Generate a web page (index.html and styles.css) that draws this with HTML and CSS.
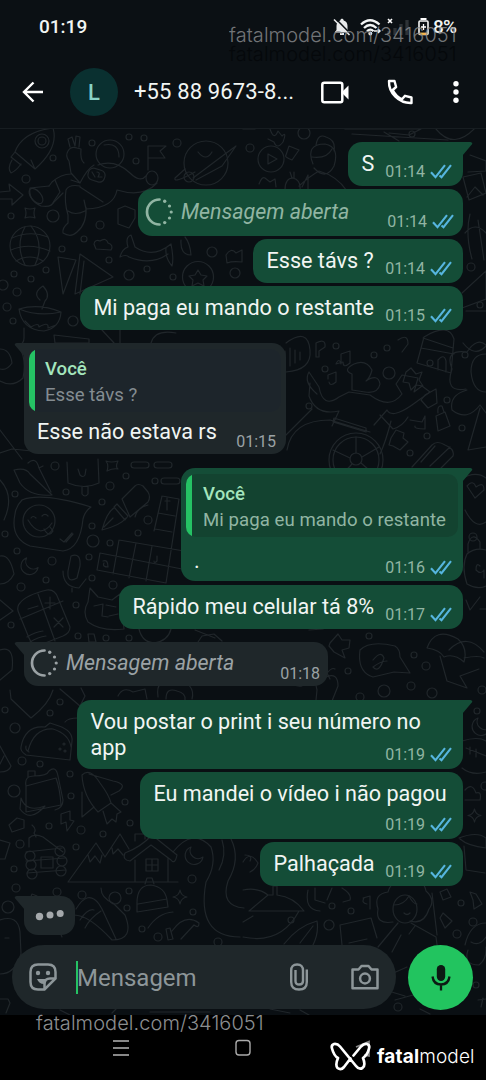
FILE: index.html
```html
<!DOCTYPE html>
<html lang="pt-BR">
<head>
<meta charset="utf-8">
<title>Conversa</title>
<link rel="stylesheet" href="styles.css">
</head>
<body>
<svg width="0" height="0" class="defs">
  <symbol id="ticks" viewBox="0 0 22 15"><path d="M1 8.200l4.500 5L15 1.200M9.500 11.500l2 1.700L21 1.200" /></symbol>
  <symbol id="once" viewBox="0 0 28 28"><path d="M14.500 1.500a12.500 12.500 0 0 0 0 25" fill="none" stroke="currentColor" stroke-width="2.700" stroke-linecap="round"/><g fill="currentColor"><circle cx="19.700" cy="3.200" r="1.700"/><circle cx="24.500" cy="8" r="1.600"/><circle cx="26.200" cy="14" r="1.600"/><circle cx="24.500" cy="20" r="1.600"/><circle cx="19.700" cy="24.600" r="1.700"/></g></symbol>
  <symbol id="moon" viewBox="0 0 22 22"><path d="M8 2a9 9 0 1 0 12 10A8 8 0 0 1 8 2z"/></symbol>
  <symbol id="spark" viewBox="0 0 16 16"><path d="M8 1q1 6 7 7q-6 1-7 7q-1-6-7-7q6-1 7-7z"/></symbol>
</svg>
<div class="phone">
  <div class="status">
    <span class="clock">01:19</span>
    <div class="status-icons">
      <svg class="bell" width="18" height="18" viewBox="0 0 18 18"><path d="M3.500 12V8c0-3 1.700-5 3.800-5.500C7.500.3 10.500.3 10.700 2.500 13 3 14.500 5 14.500 8v4l2 2.500H1.500z" fill="#e8eaeb"/><path d="M7 16h4" stroke="#e8eaeb" stroke-width="2"/><path d="M2.500.5l15 15.500" stroke="#0b1014" stroke-width="1.600"/><path d="M1 1.500l15.500 15.500" stroke="#e8eaeb" stroke-width="1.600"/></svg>
      <svg class="wifi" width="21" height="18" viewBox="0 0 21 18"><g fill="none" stroke="#f2f4f4" stroke-width="2.300"><path d="M1 6.500q9-8.500 18.500 0M4 10q6-6 12.500 0M7 13.200q3.500-3.300 6.500 0"/></g><circle cx="10.300" cy="15.500" r="1.900" fill="#f2f4f4"/><path d="M14 13h6m-2-2l2 2-2 2" stroke="#f2f4f4" stroke-width="1.500" fill="none"/></svg>
      <svg class="signal" width="22" height="18" viewBox="0 0 22 18"><path d="M1 1l4 4m0-4L1 5" stroke="#fff" stroke-width="1.600"/><path d="M2 13v4M8 10v7M14 6v11M20 2v15" stroke="#2d3236" stroke-width="3.300"/></svg>
      <svg class="battery" width="11" height="18" viewBox="0 0 11 18"><path d="M3.500 2V1h4v1" stroke="#fff" stroke-width="2" fill="none"/><rect x="1" y="3" width="9" height="13.500" rx="1" fill="none" stroke="#f4f4f4" stroke-width="1.600"/><path d="M1.500 15.800h8" stroke="#f3b44d" stroke-width="2.400"/><path d="M5.500 6v6M3 9h5" stroke="#fff" stroke-width="1.300"/></svg>
      <span class="percent">8%</span>
    </div>
  </div>
  <header class="bar">
    <svg class="back" width="22" height="22" viewBox="0 0 22 22"><path d="M21 11H2M11.500 1.500L2 11l9.500 9.500" fill="none" stroke="#fff" stroke-width="2.400"/></svg>
    <div class="avatar">L</div>
    <div class="name">+55 88 9673-8...</div>
    <svg class="video" width="28" height="23" viewBox="0 0 28 23"><rect x="1.300" y="1.800" width="20" height="19.500" rx="2" fill="none" stroke="#fff" stroke-width="2.500"/><path d="M20.500 11.500L27.500 4.500v14z" fill="#fff"/></svg>
    <svg class="call" width="26" height="26" viewBox="0 0 26 26"><path d="M2 2h5.500l1.600 6L5.700 11c2 4.200 5 7.200 9.300 9.300l3-3.500 6.500 1.700V24C12 24.500 1.500 14 2 2z" fill="none" stroke="#fff" stroke-width="2.400" stroke-linejoin="round"/></svg>
    <svg class="more" width="6" height="22" viewBox="0 0 6 22"><g fill="#fff"><circle cx="3" cy="2.800" r="2.700"/><circle cx="3" cy="11" r="2.700"/><circle cx="3" cy="19.200" r="2.700"/></g></svg>
  </header>

  <main class="chat">
    <svg class="doodles" viewBox="0 129 486 886">
      <!-- rocket, astronaut, planet -->
      <path d="M15 152q7-20 38-24q6 20-18 41zM15 152l-4 5 10 8M35 169l-4-9M12 160q-5 8-1 13q5-2 10-9"/><circle cx="42" cy="141" r="7"/><circle cx="42" cy="141" r="4"/>
      <circle cx="110" cy="154" r="14"/><path d="M104 145q15-3 15 12M84 163q-4-3-3-14l-4-1q-6-2-9 3q-3 5 1 10l2 12 9 10q7-14 14-18M70 147l-2-8 4-2 3 9 1-10 4 1-1 10M98 165q17-6 32 8q10 10 16 3M157 183q-14 15-40 7M71 180l9 3M71 174q-10 0-19 8l-3 4M63 193l-10 10M117 190q-3 18-31 19l-2-9M66 190q-2 12 2 25v8q-6 5-5 10q8 5 14-1q10-8 9-25M68 211q7 5 17 0M80 187l23 15M66 190q3-6 14-4"/><path d="M49 186l-19 2q-2 12 11 18q11 2 13-5l6-9-5-12"/><ellipse cx="36" cy="196" rx="9" ry="5" transform="rotate(50 36 196)"/><rect x="88" y="169" width="17" height="12" rx="5" transform="rotate(18 96 175)"/><path d="M92 172l3 5m2-5q4 0 1 5h4M148 170v-24h18l-6 5 5 7h-17"/><ellipse cx="152" cy="178" rx="6" ry="7"/>
      <circle cx="206" cy="163" r="22"/><path d="M195 172q-22 12-20 6l10-9M193 178l32-24 11-8-14 20-26 14M198 152q8 10 14 0"/><circle cx="189" cy="177" r="5"/>
      <path d="M0 192l10-1-1-7 14 11-11 10v-6H0M25 208q5 2 10 0q-2 5 0 10q-5-2-10 0q2-5 0-10z"/>
      <!-- globe -->
      <circle cx="30" cy="246" r="20"/><path d="M12 238q18-8 36-1M11 250q18-8 39 1M16 261q14-8 27 0M25 227q-10 18 0 38M31 226q14 18 4 39"/>
      <path d="M118 217v-8l7-3 10 4v8l-6 10-11-4zM94 244q1-5 6-3q6-4 8 2q6 2 3 7l-15-1z"/>
      <path d="M120 257q2-8 8-10q-3-10 3-12l4 12q18 12 36-3q3 15 1 22q-7-8-6-18M120 257q6-3 9 0q22 9 39-3M181 240q-1 15 10 15q-1-12-6-18"/>
      <path d="M58 257l18 3-13 34zM80 254l33 23-38 17zM84 261l-4 33"/>
      <circle cx="198" cy="277" r="15.500"/><path d="M198 270l3 5 6 1-4 4 1 6-6-3-6 3 1-6-4-4 6-1zM226 255q5-8 10-2l6-3v12q-10-1-15 1z"/>
      <path d="M19 309q20 8 42 3q-1 16-17 19q-22-1-25-22zM19 309q20-6 42 3M40 300q-8-7 3-14q8 9 2 15l-3 8M25 321l6 6q8-5 8 0q10-6 9 1l8-3"/>
      <path d="M54 335l35 4v4H55zM102 330l12 13M120 330v14M151 343q4-14 25-10M24 328v10q0 5-5 8q8 14 4 32q-10 10-23 3M0 349q10 0 12 14q-5 8-12 6"/>
      <!-- upper right -->
      <circle cx="271" cy="159" r="13"/><path d="M268 154v10l9-5zM270 129q4 12 8 2l4 5q5-5 1 6q-6 8-9 0l-6-3M243 129l12 0M289 146l10 4-7 10q-8-3-6-5zM259 184q3-8 6-6l5 4 5-3 1 8M285 190q0-12 8-12q8 2 7 12M292 178l-2-6m4 0v6M299 186q11-10 20-15q18 5 28 20M313 164q-8-20 12-20q15 3 9 22q-8 15-20 2M316 145q2-12 10-8q10 3 8 14M312 157q15 2 20-8M302 187l6-12v14M345 129l76 0-12 6-20-2M352 134l96 6M384 132l15 9M436 129q18 22 40-2M470 155l16 6v10l-18 1M463 177l18-4 5 20-17 7zM467 197l8-10 8 8M470 214q-5 20 2 45M478 220l6 40M465 233q10-12 21 0M462 293l24-22v28l-24 9M466 311h20"/>
      <!-- centre right -->
      <path d="M286 343q22-16 24 7q2 20-24 22M285 351v12M290 348v18M295 350v13M300 352v8M316 343q10-5 9 4l-6 4v6h-3zM336 364q3-7 5 0v-10l9-3v12q-7 6-7-1zM328 379v-4l8-3v10q-6 5-7 0"/>
      <path d="M352 383v-9q-10-4 2-10q12-5 18 6q-2 8-6 11q12-8 14 3q-2 10-15 8l-13-2zM317 394q-14-12-8-22l10 15q4 22 20 10l10-5 21 3q20 15 32-1l-6-10 6-9 16 3-4 14 8-6 8 6-18 13q-20 14-25 5l-13 15M310 383l-1 13q7 20 30 15l-7 15M280 441l32-32M287 450q5-30 43-30l40 12M333 422l33 10v-4l-32-10z"/>
      <circle cx="356" cy="460" r="27"/><circle cx="356" cy="460" r="23"/><circle cx="356" cy="459" r="6"/><path d="M356 453v-16M362 457l17-10M361 463l15 13M352 464l-12 13M350 458l-17-8M391 421q-5 20-11 33M380 415l13 14q10-3 15-12"/>
      <path d="M417 363l7-26q25-15 30 2l-3 34zM421 348l33 6M438 370v-10q6-7 8 1v11M423 338l30 10M466 389q-22 4-14-20q-8-20 15-17q10-15 19-7M486 354q-15 0-15 18q2 20 15 20M467 390q-18 5-15 20q15 12 28-5l6 8M480 408l-12 42 18-3M398 340q10-7 10 4l-6 8M406 372l5-4 5 6 6-2-3 8 4 6-7-1-5 5-2-7-6-1zM425 395l11-6 1 14-9 5-7-8zM436 416l9-4 5 14-12 5zM438 413q-1-8 4-7l2 6M410 420l12 2 3-6v13q-11 0-10-3M391 438l5-8 8 3-1 5 5 4-8 8-7-4-4-1zM412 467l20-22q5-5 13 0q10 4 8 11l-12 12M421 462l14-16M430 466l20-19M463 343q12 15 23 3M460 480q15-10 26-2M465 510q10 20 21 12M467 486q6-7 9 1q8-6 8 3l-9 8z"/>
      <!-- left middle -->
      <path d="M0 453l12-4 20 2M0 430l22 29M0 480q15 16 4 40M14 470q12-3 16 4l22 21q-22 2-32-12zM28 463q8-7 11 5l12 24M39 468l4-2M67 462l1 21q16 7 31 0l-1-24M82 486v8q3 4 6 0v-8M78 469l2 6q3 3 5 0l1-6M106 461q5 2 12 0q-3 6 0 8q-5-1-11 2q2-6-1-10z"/><rect x="131" y="462" width="18" height="6" rx="3"/><rect x="154" y="462" width="18" height="6" rx="3"/><rect x="161" y="478" width="19" height="6" rx="3"/>
      <path d="M22 500q20-8 69 7q-6 4-8 12q-3 30-20 32l-33-5q-20-8-15-32q1-8 7-14M60 539l4 3 8-9M66 542l7-8"/><circle cx="39" cy="521" r="16"/><path d="M28 520q12 20 24 3M31 518q2-3 5 0M42 516q3-3 6 0M44 529q5 9 9 2l-3-4"/>
      <path d="M122 499l13-13q3-3 8 0l5 6q3 5 0 10l-18 15zM117 504l11 12-3 4-11-13zM114 508q-7 4-12 22q19-5 24-12M104 527l9-9M135 517q2-9 13-12"/>
      <path d="M162 496l17 3-13 84-69-13 3-17 82 16M158 513l17 3M155 529l17 3M119 540l65 11M119 540l-6 34M136 543l-7 35M152 546l-6 35M162 496l-8 35M165 501h5m-3-3v12M157 556v5q-3 3-3 0M103 561q5-2 5 6q-6 0-4-4"/>
      <path d="M0 556q10-2 14 18q-5 10-14 10M0 600l13 11-13 9M71 556q10-4 9 10l-3 12q-10 6-9-7zM63 571q0 16 16 17l7-9M72 588v4M0 650q15-5 12 20L0 680"/>
      <path d="M20 603q6-8 27-13q8-1 11 8l12 29q0 6-7 9l-23 9q-8 1-11-7l-11-27q-1-5 2-8M38 594l17 47M20 619l43-18M45 603h10m-5-6v12M54 618l9 9m0-9l-9 9M28 609l10-3M27 637q8-5 16-6M30 642q8-5 16-6"/>
      <path d="M90 588l8 9 14 3 8-6 4 35q-22 3-36-7q-6-10 0-20zM94 606l9-2-1 12 6 1M109 616l9-2M106 605l10 2M139 629q3 13 15 14q14-2 17-14M198 642l4-6 12-2 8 7M88 634l6 0 2 8h-7zM195 630l20 8"/>
      <!-- middle right -->
      <path d="M480 548v-6q-8-11-12 2v8M467 554q8-7 19-4M467 554q-6 12 0 30q10 6 19 2M480 566q-4-4-4 4q5 5 8 0v8M466 600l4 10 10-13M480 609h6M330 643l8-9 4 6h8l-1 8-7 2 3 8-11-6-5-6zM360 650q10-10 35-4q5 3 5 11l10 16-16-1-21 5q-16-5-13-27M373 660q8-10 11-2q-5 16-11 9q8-6 14-6M427 648q8-22 31-9q10 9 6 23q-10-9-20-5q-4-7-17-9zM440 656l7 25 20 7-7-12 19-7M464 658q15-3 20 0M449 650q18-18 35 2M302 686q-10 2-13-12M309 630l14-1M316 700l1-10q-6-24 9-13q12-5 12 9l-6 15M330 679l-3-6q5-6 8-4"/>
      <!-- lower left -->
      <path d="M10 690l1 9 20 19q18-14 22-28M60 689l20 17 5-10-4-8M118 696q5-10 15-4l12-3 2 10M158 697q-3-20 18-18q20 5 16 20M166 699q0-12 11-8q9 2 8 9M65 722q3-4 13-4"/>
      <path d="M21 747q4-22 24-20l5-4 9 3q14 5 13 15l-2 19-44-5q-6-4-5-8M28 751q6-23 25-22q16 5 18 18M29 752q-4-2-3-6"/><circle cx="60" cy="749" r="1"/><circle cx="64" cy="744" r="1"/><circle cx="65" cy="751" r="1"/>
      <path d="M0 746l11 20q-2 6-11 6M4 756l-4 8M26 786l30-8q4 11 5 27l-35 7zM26 786q-2-10 8-10q13 0 15-5q7-6 9 5l5 24q0 8-8 10M28 777v-6h7v5M21 798q5 15 24 8q-15 17-25 3zM9 825l8-7 7 2v8l-12 4zM61 814l9-3v9l4 1-7 10-1-9-5 2z"/>
      <path d="M82 775q8-8 18 8q9 12 11 20l-13 9q-15-16-16-37zM89 774l24 7q15 3 6 10l-8 4M82 792v25l12-10M103 811l4 13 5-5 4 3 1-8 4-2-10-9M0 840l10 3-5 16H0M29 847v-9q5-5 14-1l20 15M32 825q5 4 2 8l2 4M26 852l36-4M26 861l39-3M27 873l39-3"/><circle cx="30" cy="856" r="5"/><circle cx="31" cy="865" r="5"/><circle cx="32" cy="874" r="5"/><circle cx="60" cy="851" r="5"/><circle cx="62" cy="861" r="5"/><circle cx="61" cy="871" r="5"/><path d="M41 857h12v11H41z"/>
      <path d="M68 882h110M68 882l28-39 9 14 15-23 9 15M88 855l2 7 5-6 5 7 2-8M112 848l1 6 5-5 5 6M125 853q16-6 27-18l25 20q-2 10-6 5l-20-15-21 16q-8-1-5-8zM135 860v22M168 858v24M146 859h12v12h-12zM152 859v12M146 865h12M135 841v-7h10v5M173 852q20-25 38-5q6 17-5 35q-10 55 34 55M231 839q10 20-3 42q-8 25 16 27M222 840q5 15-3 30"/>
      <use href="#moon" x="183" y="845" width="22" height="22"/><use href="#spark" x="172" y="889" width="16" height="16"/><use href="#spark" x="467" y="808" width="15" height="15"/><use href="#moon" x="470" y="716" width="22" height="22"/>
      <path d="M137 903q0-18 14-18q14 2 16 15l1 7-31 5zM138 904l29-5M145 884l2-6h5l2 6M101 888q0 10 12 15l12 12q10 25-13 25q-23-25-38-25M76 909q12-20 23-5l3 5 14 30M80 920q8-12 14-10M85 928q5-10 16-17M57 925l5 12M148 928q10-15 25-16M166 929l4-1 3 11-5 1zM172 931q13-18 27-8q0 6-5 2l-13 14M30 899l2-5 5 2-3 7M0 920q18-6 20 12l1 22q-6 20-21 20M5 938h4M0 999l8 0 2 4-4 10"/>
      <!-- lower right -->
      <path d="M462 741q16-5 24 0M462 768q10 8 24 4M466 748l20 8M470 747v7M476 749v8M465 790q7-8 11 3q6-2 4 7h-15M459 838q18-7 27 0v10q-18-2-26-9M464 846l2 24 19 3M243 862q7-12 15 1q-2 6-8 9M245 855q8 0 5 6M249 911l19-16h5v-9h4v9q17 2 27 16zM243 890q15-3 25 5M243 937q38 8 56-26M243 922l10-6M308 890q-4 20 12 21M315 888v12l10 3M332 888l-5 12M342 888q10 6 8 12l-7 2M363 898l7-2v13M364 898q-3 5 3 6M284 944q14-18 33-23q2 12-4 24M300 943l13-17M370 945M342 945l-2-20 31-7 6 20M349 943l18-4"/>
      <path d="M393 922q-18 3-15-13q-5-15 10-17q4-15 22-10q14-3 16 9q10 9 3 18q-5 16-19 12"/><ellipse cx="405" cy="909" rx="12" ry="14"/><path d="M394 905q10 0 15-9q4 8 8 8M404 913q3 3 6 0M398 923l-20 24M411 923l25 14 2 15M432 893l5 42M401 935l-9 17M415 926l-6 8M440 892l7-3 4 8-8 3zM443 913l9 8-7 7-5-10zM470 892l6 2 6 10-8 5-1-9zM465 945q5-22 21-22M468 950q-5 15 11 15q8-6 7-18M471 942q8 5 15-5M385 990l20 6M395 1000l18-5M389 975l18-8M478 1000l8-1M483 998l-2 9M60 1010l10 5M120 1005l-8 8M150 1012h60M270 1009l20 4M300 1010l9 5M420 1009l10 5"/>
      <!-- pebbles -->
      <g><circle cx="53" cy="158" r="3"/><circle cx="26" cy="179" r="4"/><circle cx="92" cy="143" r="3"/><circle cx="136" cy="161" r="3"/><circle cx="129" cy="137" r="3"/><circle cx="144" cy="138" r="3"/><circle cx="177" cy="143" r="4"/><circle cx="11" cy="216" r="3"/><circle cx="53" cy="216" r="6"/><circle cx="100" cy="225" r="4"/><circle cx="62" cy="249" r="3"/><circle cx="84" cy="239" r="3"/><circle cx="109" cy="260" r="3"/><circle cx="129" cy="275" r="5"/><circle cx="147" cy="269" r="3"/><circle cx="173" cy="277" r="3"/><circle cx="212" cy="252" r="5"/><circle cx="235" cy="273" r="5"/><circle cx="14" cy="274" r="3"/><circle cx="31" cy="279" r="3"/><circle cx="17" cy="292" r="4"/><circle cx="7" cy="307" r="4"/><circle cx="73" cy="321" r="5"/><circle cx="13" cy="321" r="3"/><circle cx="3" cy="285" r="5"/><circle cx="46" cy="270" r="3"/><circle cx="250" cy="148" r="4"/><circle cx="304" cy="133" r="6"/><circle cx="412" cy="134" r="3"/><circle cx="471" cy="267" r="4"/><circle cx="480" cy="305" r="3"/></g>
      <g><circle cx="336" cy="346" r="3"/><circle cx="374" cy="355" r="3"/><circle cx="387" cy="348" r="3"/><circle cx="325" cy="369" r="3"/><circle cx="389" cy="373" r="6"/><circle cx="309" cy="406" r="3"/><circle cx="447" cy="400" r="3"/><circle cx="462" cy="428" r="3"/><circle cx="427" cy="436" r="3"/><circle cx="410" cy="453" r="3"/><circle cx="465" cy="355" r="3"/><circle cx="473" cy="537" r="4"/><circle cx="430" cy="363" r="3"/><circle cx="55" cy="466" r="4"/><circle cx="15" cy="494" r="3"/><circle cx="66" cy="492" r="3"/><circle cx="110" cy="486" r="4"/><circle cx="126" cy="476" r="3"/><circle cx="155" cy="481" r="3"/><circle cx="102" cy="502" r="3"/><circle cx="92" cy="526" r="3"/><circle cx="93" cy="541" r="6"/><circle cx="110" cy="543" r="3"/><circle cx="148" cy="520" r="4"/><circle cx="138" cy="533" r="3"/><circle cx="5" cy="534" r="3"/><circle cx="17" cy="551" r="3"/><circle cx="52" cy="561" r="4"/><circle cx="89" cy="557" r="3"/><circle cx="46" cy="580" r="3"/><circle cx="21" cy="587" r="4"/><circle cx="92" cy="578" r="3"/><circle cx="113" cy="585" r="4"/><circle cx="76" cy="605" r="3"/><circle cx="11" cy="625" r="3"/><circle cx="78" cy="636" r="3"/><circle cx="106" cy="638" r="3"/><circle cx="129" cy="638" r="3"/></g><use href="#moon" x="19" y="556" width="21" height="21"/>
      <g><circle cx="369" cy="636" r="3"/><circle cx="414" cy="655" r="3"/><circle cx="426" cy="666" r="4"/><circle cx="348" cy="671" r="3"/><circle cx="411" cy="686" r="4"/><circle cx="384" cy="691" r="6"/><circle cx="432" cy="693" r="5"/><circle cx="360" cy="697" r="4"/><circle cx="482" cy="690" r="4"/><circle cx="477" cy="711" r="3"/><circle cx="5" cy="710" r="3"/><circle cx="15" cy="728" r="5"/><circle cx="50" cy="713" r="3"/><circle cx="60" cy="702" r="3"/><circle cx="22" cy="761" r="4"/><circle cx="40" cy="764" r="3"/><circle cx="70" cy="774" r="3"/><circle cx="14" cy="791" r="6"/><circle cx="71" cy="796" r="3"/><circle cx="49" cy="826" r="3"/><circle cx="81" cy="830" r="4"/><circle cx="125" cy="802" r="3"/><circle cx="130" cy="823" r="3"/><circle cx="103" cy="834" r="3"/><circle cx="20" cy="844" r="4"/><circle cx="76" cy="847" r="3"/><circle cx="14" cy="869" r="3"/><circle cx="16" cy="888" r="4"/><circle cx="8" cy="907" r="6"/><circle cx="57" cy="892" r="4"/><circle cx="82" cy="895" r="4"/><circle cx="115" cy="898" r="6"/><circle cx="129" cy="891" r="3"/><circle cx="127" cy="908" r="3"/><circle cx="192" cy="879" r="4"/><circle cx="193" cy="912" r="3"/><circle cx="142" cy="929" r="3"/><circle cx="158" cy="937" r="4"/><circle cx="218" cy="942" r="4"/><circle cx="291" cy="920" r="3"/><circle cx="329" cy="925" r="5"/><circle cx="332" cy="906" r="3"/><circle cx="351" cy="911" r="3"/><circle cx="461" cy="903" r="3"/><circle cx="473" cy="922" r="4"/><circle cx="457" cy="934" r="4"/><circle cx="398" cy="1007" r="4"/><circle cx="476" cy="985" r="3"/><circle cx="485" cy="786" r="4"/></g>
    </svg>

    <div class="log">
      <div class="msg out tail m-s"><span class="text">S</span><span class="meta">01:14<svg><use href="#ticks"/></svg></span></div>
      <div class="msg out once m-open"><svg class="ring"><use href="#once"/></svg><span class="text">Mensagem aberta</span><span class="meta">01:14<svg><use href="#ticks"/></svg></span></div>
      <div class="msg out m-esse"><span class="text">Esse távs ?</span><span class="meta">01:14<svg><use href="#ticks"/></svg></span></div>
      <div class="msg out m-paga"><span class="text">Mi paga eu mando o restante</span><span class="meta">01:15<svg><use href="#ticks"/></svg></span></div>
      <div class="msg in tail quoted m-rs"><div class="quote"><b>Você</b><span>Esse távs ?</span></div><div class="line"><span class="text">Esse não estava rs</span><span class="meta">01:15</span></div></div>
      <div class="msg out tail quoted m-dot"><div class="quote"><b>Você</b><span>Mi paga eu mando o restante</span></div><div class="line"><span class="text">.</span><span class="meta">01:16<svg><use href="#ticks"/></svg></span></div></div>
      <div class="msg out m-rapido"><span class="text">Rápido meu celular tá 8%</span><span class="meta">01:17<svg><use href="#ticks"/></svg></span></div>
      <div class="msg in tail once m-open-in"><svg class="ring"><use href="#once"/></svg><span class="text">Mensagem aberta</span><span class="meta">01:18</span></div>
      <div class="msg out tail m-vou"><span class="text">Vou postar o print i seu número no<br>app</span><span class="meta">01:19<svg><use href="#ticks"/></svg></span></div>
      <div class="msg out m-video"><span class="text">Eu mandei o vídeo i não pagou</span><span class="meta">01:19<svg><use href="#ticks"/></svg></span></div>
      <div class="msg out m-palh"><span class="text">Palhaçada</span><span class="meta">01:19<svg><use href="#ticks"/></svg></span></div>
      <div class="msg in tail m-typing"><svg width="30" height="12" viewBox="0 0 30 12"><g fill="#a5a9ac"><circle cx="4.500" cy="7.500" r="3.700"/><circle cx="15" cy="6" r="3.500"/><circle cx="25.200" cy="4.500" r="3.500"/></g></svg></div>
    </div>

    <div class="composer">
      <div class="field">
        <svg class="sticker" width="28" height="28" viewBox="0 0 28 28"><g fill="none" stroke="#8d9699" stroke-width="2.500"><path d="M9 1.500h10q7.500 0 7.500 7.500v6.500L15.500 26.500H9q-7.500 0-7.500-7.500V9q0-7.500 7.500-7.500z"/><path d="M15.500 26.500V21q0-5.500 5.500-5.500h5.500"/></g><path d="M8 16h10q-3 2-3 5-5 0-7-5z" fill="#8d9699"/><circle cx="9" cy="10" r="2.200" fill="#8d9699"/><circle cx="19" cy="10" r="2.200" fill="#8d9699"/></svg>
        <span class="caret"></span>
        <span class="placeholder">Mensagem</span>
        <svg class="clip" width="20" height="28" viewBox="0 0 20 28"><path d="M17.800 6.500V19q0 7.500-7.800 7.500T2.200 19V7.500q0-6 5.900-6t5.900 6V18q0 3.500-3.800 3.500T6.500 18V7" fill="none" stroke="#8d9699" stroke-width="2.400"/></svg>
        <svg class="camera" width="28" height="26" viewBox="0 0 28 26"><path d="M1.500 5.500h6L10.500 2h7l3 3.500h6v18.700h-25z" fill="none" stroke="#8d9699" stroke-width="2.500" stroke-linejoin="round"/><circle cx="14" cy="14.500" r="4.900" fill="none" stroke="#8d9699" stroke-width="2.500"/></svg>
      </div>
      <div class="mic"><svg width="20" height="27" viewBox="0 0 20 27"><rect x="5.800" y="1" width="8.400" height="16" rx="4.200" fill="#0c1a13"/><path d="M1.500 12.500q1 8 8.500 8t8.500-8M10 20v6.500" fill="none" stroke="#0c1a13" stroke-width="2.300"/></svg></div>
    </div>
  </main>

  <footer class="nav">
    <svg class="menu" width="18" height="18" viewBox="0 0 18 18"><path d="M1 2h16M1 9h16M1 16h16" stroke="#b5b5b5" stroke-width="1.600"/></svg>
    <svg class="home" width="18" height="18" viewBox="0 0 18 18"><rect x="2" y="1.500" width="14" height="14.500" rx="3" fill="none" stroke="#aaa" stroke-width="1.400"/></svg>
    <div class="brand">
      <svg width="42" height="32" viewBox="0 0 42 32"><path d="M26 7L39 1.500V16L34 15" fill="none" stroke="#888" stroke-width="1.700"/><path d="M20.500 18.500L14 27q-3 3.500-6.500 1-2.500-3 .5-10Q4 16 2 8.500 1 5 4 4q3.500-.5 6 2.500l16 19.500q3 4 6.500 2 3.500-2.500.5-10 4.500-3 6-9.500 1-3.500-2-4.500-3-.5-6 2.500l-7.500 9" fill="none" stroke="#fff" stroke-width="2.700" stroke-linejoin="round" stroke-linecap="round"/></svg>
      <span class="word"><b>fatal</b>model</span>
    </div>
  </footer>

  <div class="mark mark-shadow">fatalmodel.com/3416051</div>
  <div class="mark mark-top">fatalmodel.com/3416051</div>
  <div class="mark mark-bottom">fatalmodel.com/3416051</div>
</div>
</body>
</html>
```
FILE: styles.css
```css
* { box-sizing: border-box; }
body { margin: 0; background: #000; font-family: Roboto, "Noto Sans", sans-serif; color: #f1f5f3; }
svg { display: block; flex: none; }
.defs { position: absolute; }
.phone { position: relative; width: 486px; height: 1080px; overflow: hidden; display: flex; flex-direction: column; background: #0b1014; }

.status { height: 54px; display: flex; justify-content: space-between; padding: 15px 27px 0 39px; font-weight: 500; font-size: 19px; line-height: 23px; }
.status-icons { display: flex; align-items: center; height: 23px; }
.wifi { margin-left: 9px; }
.signal { margin-left: 6px; }
.battery { margin-left: 9px; }
.percent { margin-left: 4px; width: 26px; font-size: 19px; letter-spacing: -0.9px; white-space: nowrap; }

.bar { height: 75px; display: flex; align-items: center; padding: 0 27px 0 22px; border-bottom: 1px solid #171d21; }
.back { margin-top: 2px; }
.avatar { width: 48px; height: 48px; margin: 2px 0 0 26px; border-radius: 50%; background: #0a3030; color: #87d3c6; font-size: 22px; font-weight: 500; line-height: 50px; text-align: center; }
.name { width: 187px; margin-left: 16px; font-size: 22px; letter-spacing: 0.13px; white-space: nowrap; }
.video { margin-top: 2px; }
.call { margin: 1px 0 0 38px; }
.more { margin: 2px 0 0 40px; }

.chat { position: relative; height: 886px; background: #0a0f13; display: flex; flex-direction: column; }
.doodles { position: absolute; inset: 0; width: 486px; height: 886px; fill: none; stroke: #20262a; stroke-width: 1.2; stroke-linejoin: round; stroke-linecap: round; }
.log { position: relative; height: 816px; padding: 13px 23px 0 24px; display: flex; flex-direction: column; align-items: flex-start; }

.msg { position: relative; display: flex; justify-content: space-between; align-items: flex-start; height: 44px; padding: 9px 11px 5px 13.500px; border-radius: 14px; margin-top: 3px; flex: none; }
.out { align-self: flex-end; background: #144d37; --muted: #91b5a3; }
.in { background: #1f272a; --muted: #9ba2a5; }
.out.tail { border-top-right-radius: 0; }
.in.tail { border-top-left-radius: 0; }
.tail::before { content: ""; position: absolute; top: 0; width: 12px; height: 13px; background: inherit; }
.out.tail::before { left: calc(100% - 2px); clip-path: polygon(0 0, 80% 0, 95% 8%, 90% 20%, 16% 100%, 0 100%); }
.in.tail::before { right: calc(100% - 2px); clip-path: polygon(100% 0, 20% 0, 5% 8%, 10% 20%, 84% 100%, 100% 100%); }
.text { font-size: 21.600px; line-height: 26px; white-space: nowrap; }
.meta { display: flex; flex: none; align-self: flex-end; font-size: 16px; line-height: 18px; color: var(--muted); }
.meta svg { width: 22px; height: 15px; margin: 1px 0 0 5px; fill: none; stroke: #56b5df; stroke-width: 2.100; }
.once { color: var(--muted); padding: 10px 9px 5px 7px; justify-content: flex-start; }
.once .text { margin-left: 8px; font-size: 21.400px; font-style: italic; }
.once .meta { margin-left: auto; }
.ring { width: 28px; height: 28px; margin-top: -1px; }
.quoted { flex-direction: column; padding: 6px 5px 0; justify-content: flex-start; }
.quote { align-self: stretch; height: 63px; padding: 7px 0 0 16px; display: flex; flex-direction: column; background: linear-gradient(to right, #25c264 6px, var(--quote) 6px); border-radius: 10px; font-size: 18.600px; line-height: 26px; color: var(--muted); white-space: nowrap; }
.quote b { font-weight: 500; color: #a4e5bd; }
.in .quote { --quote: #1d252b; color: #848c91; }
.out .quote { --quote: #134330; padding-left: 17px; letter-spacing: 0.06px; }
.line { align-self: stretch; display: flex; justify-content: space-between; flex: 1; padding: 7px 6px 4px 8px; }

.m-s { width: 115px; margin-top: 0; }
.m-open { width: 325px; height: 47px; }
.m-esse { width: 210px; }
.m-paga { width: 383px; }
.m-rs { width: 262px; height: 111px; margin-top: 13px; }
.m-rs .line { padding: 7px 5px 3px 8px; }
.m-dot { width: 282px; height: 113px; margin-top: 14px; }
.m-dot .text { padding-top: 4px; }
.m-rapido { width: 344px; margin-top: 4px; }
.m-open-in { width: 304px; height: 44px; margin-top: 13px; padding: 8px 8px 3px 6px; }
.m-vou { width: 386px; height: 69px; margin-top: 14px; }
.m-vou .meta, .m-video .meta { margin-left: -80px; }
.m-video { width: 323px; height: 67px; }
.m-palh { width: 203px; }
.m-typing { width: 51px; height: 39px; margin-top: 10px; padding: 13px 0 0 11px; }

.composer { position: relative; display: flex; align-items: center; gap: 12px; height: 64px; padding: 0 12px; }
.field { width: 384px; height: 64px; border-radius: 32px; background: #1f272a; display: flex; align-items: center; padding: 0 17px; }
.caret { width: 2px; height: 33px; margin-left: 19px; background: #25c264; }
.placeholder { width: 212px; margin-left: -1px; padding-top: 1px; font-size: 24px; color: #8d9699; }
.camera { margin-left: 42px; }
.mic { width: 65px; height: 65px; border-radius: 50%; background: #22c45f; display: grid; place-items: center; flex: none; }

.nav { height: 65px; display: flex; padding-left: 112px; background: #000; }
.menu { margin-top: 24px; }
.home { margin: 24px 0 0 104px; }
.brand { display: flex; align-items: center; margin: 24px 0 0 78px; height: 34px; }
.word { margin-left: 5px; font-family: Inter, sans-serif; font-size: 19px; font-weight: 300; letter-spacing: 0.150px; color: #fff; }
.word b { font-weight: 700; }

.mark { position: absolute; font-family: Inter, "Open Sans", sans-serif; font-weight: 300; font-size: 20px; letter-spacing: 0.060px; line-height: 24px; white-space: nowrap; color: #8b8e90; }
.mark-top { left: 229px; top: 23px; opacity: .8; }
.mark-shadow { left: 229px; top: 42px; color: #05080b; }
.mark-bottom { left: 36px; top: 1011px; }
```
